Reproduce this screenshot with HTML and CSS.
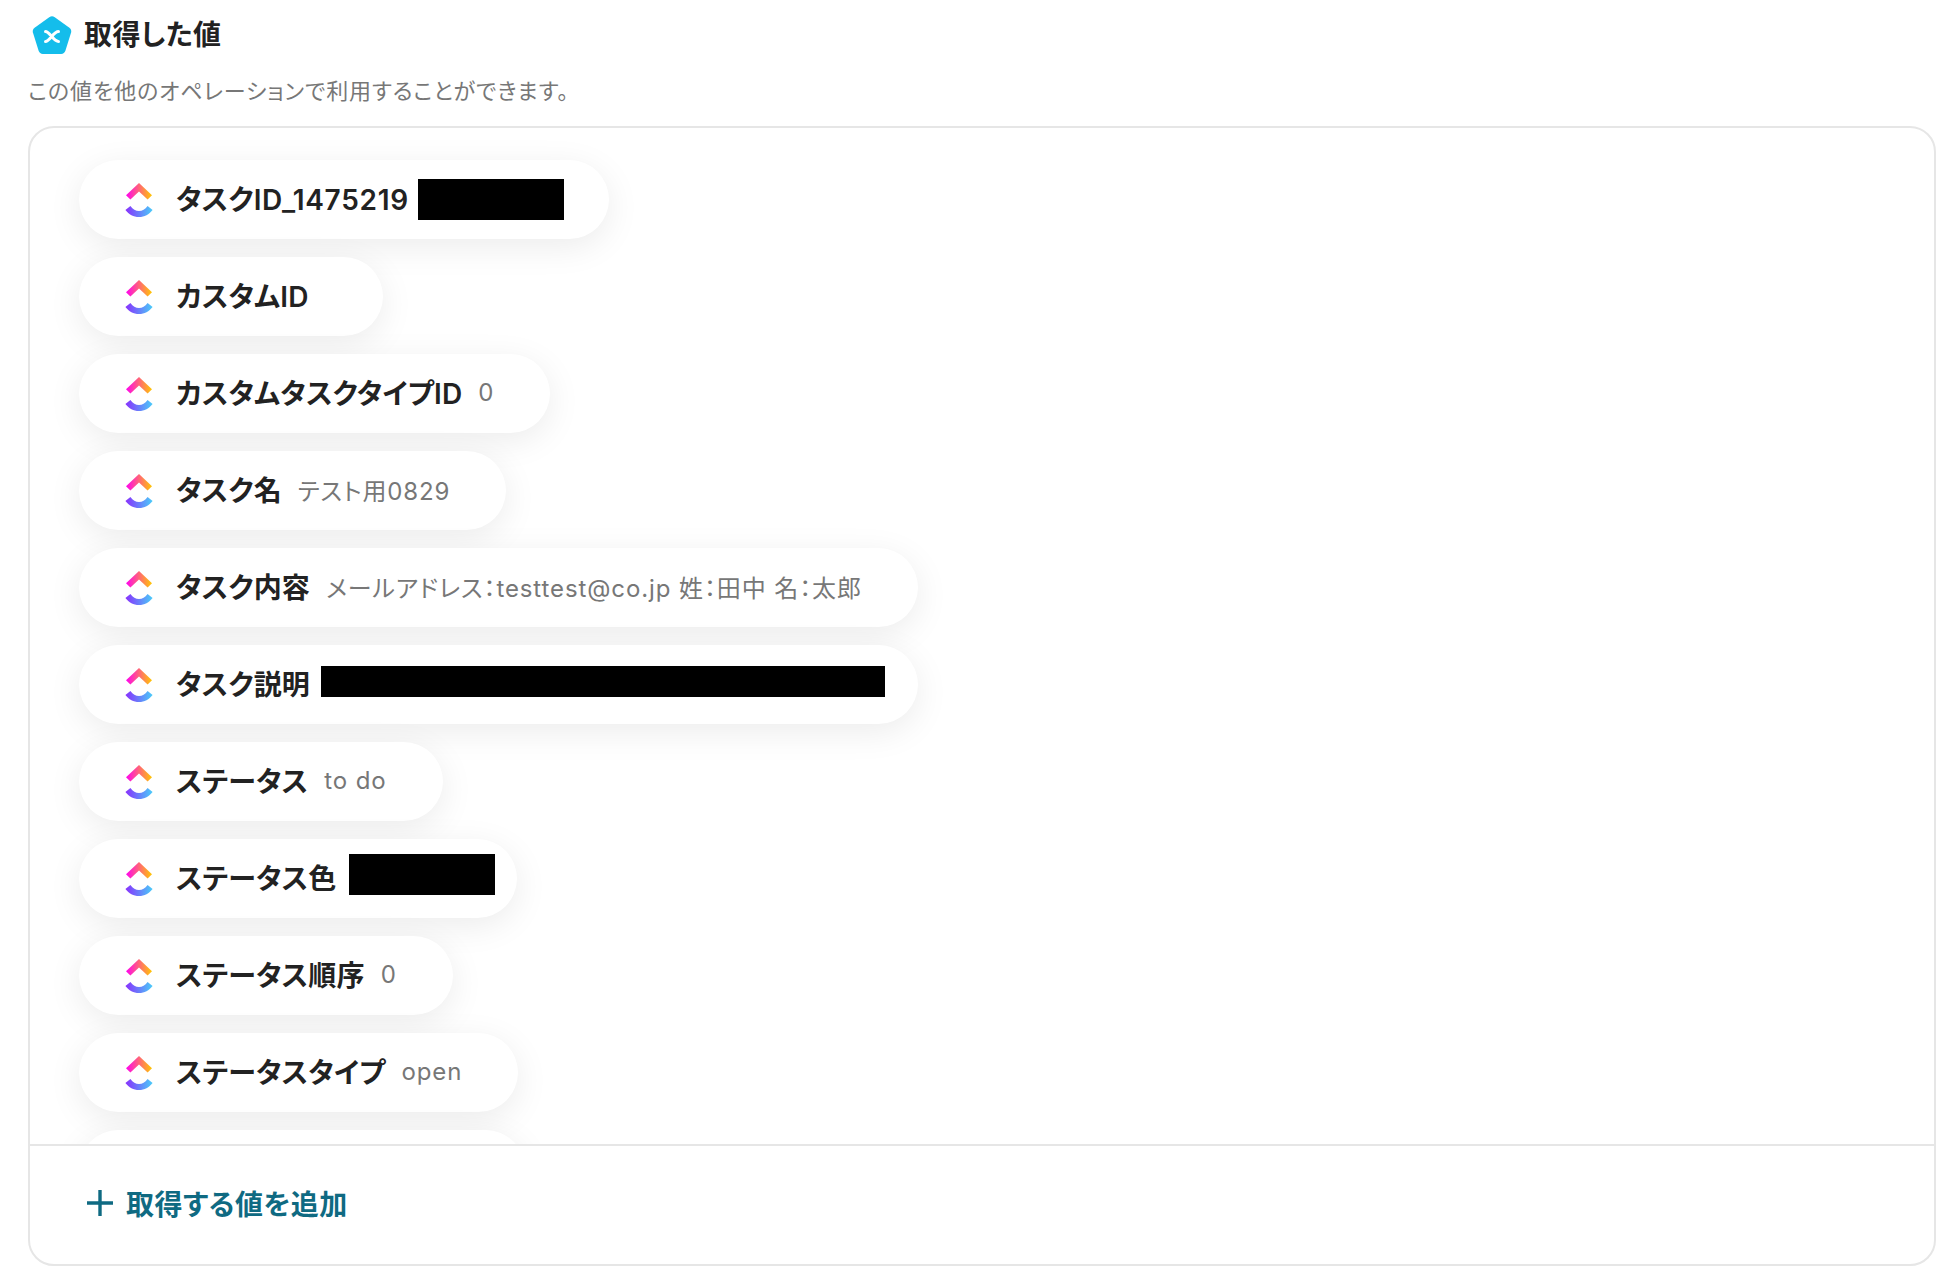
FILE: index.html
```html
<!DOCTYPE html>
<html lang="ja">
<head>
    <meta charset="UTF-8">
    <title>取得した値</title>
    <link rel="stylesheet" href="styles.css">
</head>
<body>
    <svg class="defs" width="0" height="0">
        <defs>
            <linearGradient id="cuTop" x1="0" y1="0" x2="1" y2="0">
                <stop offset="0" stop-color="#ff02f0"/>
                <stop offset="1" stop-color="#ffc800"/>
            </linearGradient>
            <linearGradient id="cuBottom" x1="0" y1="0" x2="1" y2="0">
                <stop offset="0" stop-color="#8930fd"/>
                <stop offset="1" stop-color="#49ccf9"/>
            </linearGradient>
            <symbol id="clickup" viewBox="0 0 28 34">
                <path fill="url(#cuTop)" d="M14 0L27 12.3L22.6 16.6L14 8.6L5.4 16.6L1 12.3Z"/>
                <path fill="url(#cuBottom)" d="M0.4 27L5.4 23C8 26.4 10.6 28 14 28C17.4 28 20 26.4 22.6 23L27.6 27C24 31.6 19.6 34 14 34C8.4 34 4 31.6 0.4 27Z"/>
            </symbol>
        </defs>
    </svg>

    <div class="page">
        <div class="title-row">
            <svg class="title-icon" viewBox="0 0 40 39">
                <path fill="#14bdeb" d="M17.6 1L2.6 11.8C1 13 0.4 14.8 0.9 16.6L6.6 34.8C7.2 36.7 8.8 38 10.8 38H29.2C31.2 38 32.8 36.7 33.4 34.8L39.1 16.6C39.6 14.8 39 13 37.4 11.8L22.4 1C20.9 0 19.1 0 17.6 1Z"/>
                <path fill="none" stroke="#fff" stroke-width="3" stroke-linecap="round" d="M13.5 15.5C17.5 15.5 21.5 25.5 26.5 25.5M26.5 15.5C21.5 15.5 17.5 25.5 13.5 25.5"/>
            </svg>
            <h2 class="title">取得した値</h2>
        </div>
        <p class="subtitle">この値を他のオペレーションで利用することができます。</p>

        <div class="card">
            <div class="value-list">
                <div class="pill">
                    <svg class="pill-icon"><use href="#clickup"/></svg>
                    <span class="pill-label">タスク<span class="label-id">ID_1475219</span></span>
                    <span class="redact redact-id"></span>
                </div>
                <div class="pill">
                    <svg class="pill-icon"><use href="#clickup"/></svg>
                    <span class="pill-label">カスタムID</span>
                    <span class="pill-value"></span>
                </div>
                <div class="pill">
                    <svg class="pill-icon"><use href="#clickup"/></svg>
                    <span class="pill-label">カスタムタスクタイプID</span>
                    <span class="pill-value">0</span>
                </div>
                <div class="pill">
                    <svg class="pill-icon"><use href="#clickup"/></svg>
                    <span class="pill-label">タスク名</span>
                    <span class="pill-value">テスト用0829</span>
                </div>
                <div class="pill">
                    <svg class="pill-icon"><use href="#clickup"/></svg>
                    <span class="pill-label">タスク内容</span>
                    <span class="pill-value">メールアドレス：testtest@co.jp 姓：田中 名：太郎</span>
                </div>
                <div class="pill">
                    <svg class="pill-icon"><use href="#clickup"/></svg>
                    <span class="pill-label">タスク説明</span>
                    <span class="redact redact-desc"></span>
                </div>
                <div class="pill">
                    <svg class="pill-icon"><use href="#clickup"/></svg>
                    <span class="pill-label">ステータス</span>
                    <span class="pill-value">to do</span>
                </div>
                <div class="pill">
                    <svg class="pill-icon"><use href="#clickup"/></svg>
                    <span class="pill-label">ステータス色</span>
                    <span class="redact redact-color"></span>
                </div>
                <div class="pill">
                    <svg class="pill-icon"><use href="#clickup"/></svg>
                    <span class="pill-label">ステータス順序</span>
                    <span class="pill-value">0</span>
                </div>
                <div class="pill">
                    <svg class="pill-icon"><use href="#clickup"/></svg>
                    <span class="pill-label">ステータスタイプ</span>
                    <span class="pill-value">open</span>
                </div>
                <div class="pill pill-cut"></div>
            </div>
            <div class="card-footer">
                <svg class="plus-icon" viewBox="0 0 28 28">
                    <path fill="none" stroke="#0f6a82" stroke-width="3.4" d="M14 1V27M1 14H27"/>
                </svg>
                <span class="add-label">取得する値を追加</span>
            </div>
        </div>
    </div>
</body>
</html>
```

FILE: styles.css
```css
* {
    box-sizing: border-box;
}
html, body {
    margin: 0;
    padding: 0;
    height: 100%;
    overflow: hidden;
    background: #fff;
}
body {
    font-family: Inter, "Noto Sans CJK JP", "Noto Sans", sans-serif;
    font-feature-settings: "palt";
    color: #222;
}
.defs {
    position: absolute;
}
.page {
    height: 1278px;
    padding: 15px 20px 12px 28px;
    display: flex;
    flex-direction: column;
}
.title-row {
    display: flex;
    align-items: center;
    height: 40px;
    padding-left: 4px;
}
.title-icon {
    width: 40px;
    height: 39px;
    margin-right: 12px;
}
.title {
    margin: 0;
    font-size: 28px;
    font-weight: 600;
    letter-spacing: 0.4px;
    line-height: 40px;
}
.subtitle {
    margin: 21px 0 0 0;
    font-size: 22px;
    line-height: 30px;
    letter-spacing: 0.9px;
    color: #777;
}
.card {
    margin-top: 20px;
    flex: 1;
    min-height: 0;
    display: flex;
    flex-direction: column;
    border: 2px solid #e6e6e6;
    border-radius: 26px;
    overflow: hidden;
}
.value-list {
    flex: 1;
    min-height: 0;
    overflow: hidden;
    padding: 32px 0 0 49px;
    display: flex;
    flex-direction: column;
    align-items: flex-start;
    gap: 18px;
}
.pill {
    flex: none;
    height: 79px;
    padding: 0 56px 0 46px;
    display: flex;
    align-items: center;
    background: #fff;
    border-radius: 40px;
    box-shadow: 0 8px 34px rgba(0, 0, 0, 0.08);
}
.pill-cut {
    width: 446px;
}
.pill-icon {
    flex: none;
    width: 28px;
    height: 34px;
    margin-right: 23px;
}
.pill-label {
    margin-bottom: 4px;
    font-size: 28px;
    font-weight: 600;
    letter-spacing: 0.2px;
    white-space: nowrap;
}
.label-id {
    letter-spacing: 0.7px;
}
.pill-value {
    margin: 0 0 2px 16px;
    font-size: 24px;
    letter-spacing: 0.9px;
    color: #777;
    white-space: nowrap;
}
.pill-value:empty {
    margin-left: 18px;
}
.redact {
    background: #000;
}
.redact-id {
    width: 146px;
    height: 41px;
    margin: 0 -11px 0 9px;
}
.redact-desc {
    width: 564px;
    height: 31px;
    margin: 0 -23px 6px 11px;
}
.redact-color {
    width: 146px;
    height: 41px;
    margin: 0 -34px 9px 13px;
}
.card-footer {
    flex: none;
    height: 120px;
    padding-left: 56px;
    display: flex;
    align-items: center;
    border-top: 2px solid #e6e6e6;
}
.plus-icon {
    width: 28px;
    height: 28px;
    margin: 0 12px 4px 0;
}
.add-label {
    margin-bottom: 5px;
    font-size: 28px;
    font-weight: 600;
    letter-spacing: 0.5px;
    color: #0f6a82;
}
```
